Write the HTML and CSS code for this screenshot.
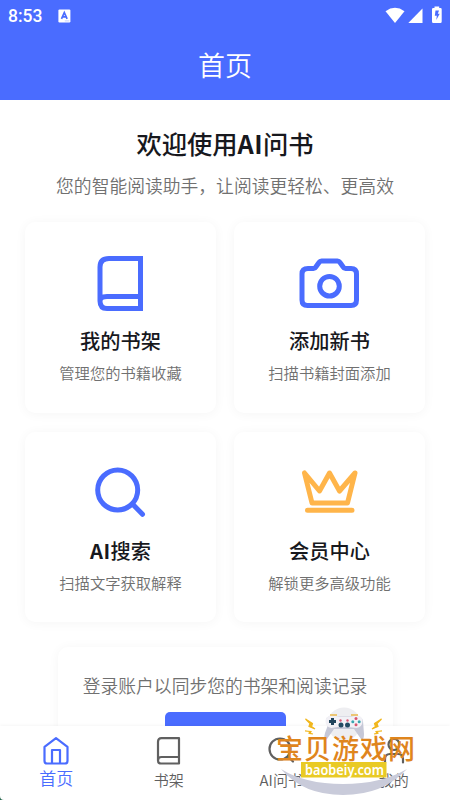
FILE: index.html
```html
<!DOCTYPE html>
<html lang="zh-CN">
<head>
<meta charset="utf-8">
<title>首页</title>
<link rel="stylesheet" href="styles.css">
</head>
<body>
<div class="screen">
  <header class="header">
    <div class="status">
      <span class="time">8:53</span>
      <svg class="app-icon" width="13" height="14" viewBox="0 0 13 14"><rect x=".4" y=".4" width="12" height="13" rx="1.2" fill="#fff"/><path d="M3.5 9.8 6.3 3.5 9.1 9.8M4.5 7.8h3.6" fill="none" stroke="#4a6cff" stroke-width="1.7"/><path d="M6.8 11.9h4.5" stroke="#a6b7ff" stroke-width=".7"/></svg>
      <svg class="signals" width="58" height="18" viewBox="0 0 58 18" fill="#fff"><path d="M.5 5.2Q10 -1.5 19.5 5.2L10 17Z"/><path d="M23.3 17 37.5 2.5V17Z"/><path d="M47 3.2Q47 2 48.2 2H49.500V.5h4.700V2h1.300Q56.700 2 56.700 3.200V15.500Q56.700 17 55.400 17H48.300Q47 17 47 15.500Z"/><path d="M50.500 4.500h3.500l-1.200 3.300h1.900L51.300 14l.5-4.200h-2Z" fill="#4a6cff"/></svg>
    </div>
    <div class="page-title">首页</div>
  </header>
  <main class="content">
    <h1>欢迎使用<b>AI</b>问书</h1>
    <p class="subtitle">您的智能阅读助手，让阅读更轻松、更高效</p>
    <div class="grid">
      <section class="card">
        <svg class="icon book" width="72" height="72" viewBox="0 0 72 72"><path d="M24 11.500H55.500V61.500H22Q15 61.500 15 54V20Q15 11.500 24 11.500ZM15 54Q15 49.500 22 49.500H55.500"/></svg>
        <h2>我的书架</h2><p>管理您的书籍收藏</p>
      </section>
      <section class="card">
        <svg class="icon" width="72" height="72" viewBox="0 0 72 72"><path d="M14 21.500H19.500Q21 21.500 21.800 20L25 15.500Q26 14 27.500 14H43.500Q45 14 46 15.500L49.200 20Q50 21.500 51.500 21.500H57Q62.500 21.500 62.500 27V53Q62.500 58.500 57 58.500H13.500Q8 58.500 8 53V27Q8 21.500 14 21.500Z"/><circle cx="35.500" cy="39.200" r="9.800"/></svg>
        <h2>添加新书</h2><p>扫描书籍封面添加</p>
      </section>
      <section class="card">
        <svg class="icon" width="72" height="72" viewBox="0 0 72 72"><circle cx="32.700" cy="33" r="20"/><path d="m47.500 47 10 10.300"/></svg>
        <h2><b>AI</b>搜索</h2><p>扫描文字获取解释</p>
      </section>
      <section class="card">
        <svg class="icon crown" width="72" height="72" viewBox="0 0 72 72"><path d="m10.500 16 7.500 30h35.500l7.500-30-15.500 18-10-18-10 18ZM13.500 53.300h44.500"/></svg>
        <h2>会员中心</h2><p>解锁更多高级功能</p>
      </section>
    </div>
    <section class="login">
      <p>登录账户以同步您的书架和阅读记录</p>
      <div class="login-button"></div>
    </section>
  </main>
  <nav class="tabs">
    <div class="tab active">
      <svg width="30" height="30" viewBox="0 0 30 30"><path d="M3.500 10.800 15 2.200l11.500 8.600V25Q26.500 27.500 24 27.500H6Q3.500 27.500 3.500 25ZM11 27.500V14h8V27.500"/></svg><span>首页</span>
    </div>
    <div class="tab">
      <svg width="30" height="30" viewBox="0 0 30 30"><path d="M7.500 2.200H25V27.500H7Q4 27.500 4 24.500V5.700Q4 2.200 7.500 2.200ZM4 24.500Q4 21 7.500 21H25"/></svg><span>书架</span>
    </div>
    <div class="tab">
      <svg width="30" height="30" viewBox="0 0 30 30"><circle cx="14" cy="13" r="10.500"/><path d="m22 20.500 5 5"/></svg><span>AI问书</span>
    </div>
    <div class="tab">
      <svg width="30" height="30" viewBox="0 0 30 30"><circle cx="15" cy="8.500" r="5.500"/><path d="M6 26.500V23Q6 18 11 18h8Q24 18 24 23V26.500"/></svg><span>我的</span>
    </div>
  </nav>
  <svg class="brand" width="150" height="100" viewBox="270 700 150 100">
    <circle cx="344" cy="724" r="16.500" fill="#eeeef1"/>
    <path d="M281 769Q305 784 343 784T407 769Q383 795 343 795T281 769Z" fill="#c9cbda"/>
    <path d="M326 719Q327 716 334 716h21q7 0 8 5l1 13q0 7-3 5l-7-10h-20l-7 10q-4 2-2-6l3-8q-2-2-1-6Z" fill="#c6c8d7"/>
    <path d="M325.500 721q0-5 6-5.500l8 1h12l6-1q5 .5 5 5.500 0 6-6 7l-8-1h-11l-6 1q-6-1-6-7Z" fill="#f2f1f6"/>
    <path d="M329 721.500h7M332.500 718v7" stroke="#20445c" stroke-width="3"/>
    <g fill="#244b62"><circle cx="341" cy="725" r="2.500"/><circle cx="347.500" cy="725" r="2.500"/></g>
    <g fill="#d95570"><circle cx="340.500" cy="720.500" r="1.200"/><circle cx="347.500" cy="720.500" r="1.200"/><circle cx="356" cy="718.500" r="1.500"/><circle cx="356" cy="724.800" r="1.500"/></g>
    <g fill="#39a6b0"><circle cx="352.800" cy="721.700" r="1.500"/><circle cx="359.200" cy="721.700" r="1.500"/></g>
    <path d="M330 715h7M351 715h7" stroke="#ecb94b" stroke-width="1.600"/>
    <path d="m305.500 719 7 4.500-1 3 3.500 2.500-6-2.500 1-3ZM305 731l6 .5-1 2 3 .5-4-1 1-1.500ZM381.500 719l-7 4.500 1 3-3.500 2.500 6-2.500-1-3ZM382 731l-6 .5 1 2-3 .5 4-1-1-1.500Z" fill="#f1b71e" stroke="#f1b71e" stroke-width="1.200"/>
    <text class="brand-name" x="276" y="759" textLength="139">宝贝游戏网</text>
    <path d="M301 762h85.500v15.500H301Z" fill="#e9ca25"/>
    <text class="brand-url" x="305" y="774.500" textLength="79" lengthAdjust="spacingAndGlyphs">baobeiy.com</text>
  </svg>
  <svg class="corner" width="4" height="4" viewBox="0 0 4 4"><path d="M0 0Q0 4 4 4H0Z" fill="#27674e"/></svg>
</div>
</body>
</html>
```
FILE: styles.css
```css
* { box-sizing: border-box; }
body { margin: 0; background: #fff; font-family: "Noto Sans CJK SC", sans-serif; }
h1, h2, p { margin: 0; }
.screen { position: relative; width: 450px; height: 800px; overflow: hidden; display: flex; flex-direction: column; }
.header { height: 100px; flex: none; background: #4a6cff; color: #fff; }
.status { height: 32px; display: flex; align-items: center; padding: 0 7px 0 8px; }
.time { font: 500 17.500px/32px Roboto, sans-serif; width: 50px; }
.app-icon { margin-top: -1px; }
.signals { margin-left: auto; margin-top: -3px; }
.page-title { height: 68px; line-height: 66px; text-align: center; font-size: 27px; font-weight: 350; }
.content { flex: 1; min-height: 0; overflow: hidden; padding: 25px 25px 0; text-align: center; }
h1 { font-size: 25.300px; line-height: 36px; font-weight: 500; color: #17181d; }
h1 b, h2 b { font-weight: 700; letter-spacing: .4px; }
.subtitle { margin-top: 11px; font-size: 17.800px; line-height: 27px; font-weight: 350; color: #707070; white-space: nowrap; }
.grid { display: grid; grid-template-columns: 191px 191px; gap: 19px 18px; margin-top: 23px; }
.card { height: 190.500px; border-radius: 10px; background: #fff; box-shadow: 0 1px 12px rgba(0, 0, 0, .045); display: flex; flex-direction: column; align-items: center; padding-top: 25px; }
.icon { fill: none; stroke: #4a6cff; stroke-width: 5; stroke-linejoin: round; stroke-linecap: round; }
.book { stroke-linejoin: miter; }
.crown { stroke: #ffb54a; }
h2 { margin-top: 7px; font-size: 20.200px; line-height: 30px; font-weight: 500; color: #17181d; }
.card p { margin-top: 4px; font-size: 15.300px; line-height: 24px; font-weight: 350; color: #707070; }
.login { width: 335px; height: 160px; margin: 25px auto 0; padding-top: 25px; border-radius: 10px; box-shadow: 0 1px 12px rgba(0, 0, 0, .045); }
.login p { font-size: 17.800px; line-height: 27px; color: #707070; font-weight: 350; }
.login-button { width: 121px; height: 45px; margin: 13px auto 0; border-radius: 5px; background: #4a6cff; }
.tabs { position: relative; height: 74px; flex: none; display: grid; grid-template-columns: repeat(4, 1fr); background: #fff; box-shadow: 0 -1px 3px rgba(0, 0, 0, .04); }
.tab { display: flex; flex-direction: column; align-items: center; padding-top: 10px; color: #606060; font-size: 15px; line-height: 24px; font-weight: 350; }
.tab span { margin-top: 2px; }
.tab svg { fill: none; stroke: currentColor; stroke-width: 2.200; stroke-linejoin: round; stroke-linecap: round; }
.tab.active { color: #4a6cff; font-size: 17px; }
.tab.active span { margin-top: 0; }
.brand { position: absolute; left: 270px; top: 700px; }
.brand-name { font-size: 27px; fill: #df851d; font-weight: 500; }
.brand-url { font: 600 15px "Noto Sans", sans-serif; fill: #fff; }
.corner { position: absolute; left: 0; bottom: 0; }
```
